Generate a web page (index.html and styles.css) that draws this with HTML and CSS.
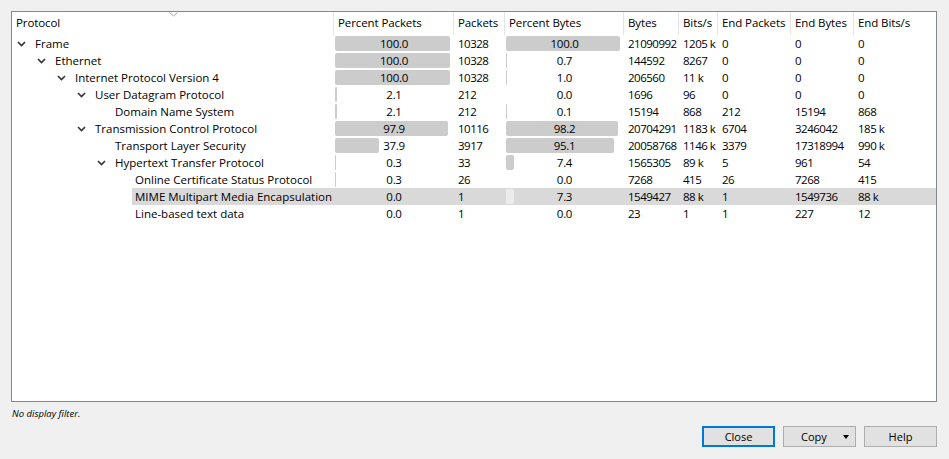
FILE: index.html
```html
<!DOCTYPE html>
<html>
<head>
<meta charset="utf-8">
<link rel="stylesheet" href="styles.css">
</head>
<body>
<div class="dialog">
  <div class="tree">
    <div class="row hdr">
      <div class="h proto">Protocol<svg class="sort" width="9" height="5" viewBox="0 0 9 5"><polyline points="0.5,0.5 4.5,4 8.5,0.5" fill="none" stroke="#a8a8a8" stroke-width="1"/></svg></div>
      <div class="h">Percent Packets</div>
      <div class="h">Packets</div>
      <div class="h">Percent Bytes</div>
      <div class="h">Bytes</div>
      <div class="h">Bits/s</div>
      <div class="h">End Packets</div>
      <div class="h">End Bytes</div>
      <div class="h last">End Bits/s</div>
    </div>

    <div class="row">
      <div class="c proto l0"><span class="tw"><svg width="9" height="6" viewBox="0 0 9 6"><polyline points="1,1 4.5,4.5 8,1" fill="none" stroke="#333" stroke-width="1.6"/></svg></span><span class="lbl">Frame</span></div>
      <div class="c pct"><span class="bar" style="--p:1"></span><span class="pv">100.0</span></div>
      <div class="c">10328</div>
      <div class="c pct"><span class="bar" style="--p:1"></span><span class="pv">100.0</span></div>
      <div class="c">21090992</div><div class="c">1205 k</div><div class="c">0</div><div class="c">0</div><div class="c">0</div>
    </div>

    <div class="row">
      <div class="c proto l1"><span class="tw"><svg width="9" height="6" viewBox="0 0 9 6"><polyline points="1,1 4.5,4.5 8,1" fill="none" stroke="#333" stroke-width="1.6"/></svg></span><span class="lbl">Ethernet</span></div>
      <div class="c pct"><span class="bar" style="--p:1"></span><span class="pv">100.0</span></div>
      <div class="c">10328</div>
      <div class="c pct"><span class="bar" style="--p:0.007"></span><span class="pv">0.7</span></div>
      <div class="c">144592</div><div class="c">8267</div><div class="c">0</div><div class="c">0</div><div class="c">0</div>
    </div>

    <div class="row">
      <div class="c proto l2"><span class="tw"><svg width="9" height="6" viewBox="0 0 9 6"><polyline points="1,1 4.5,4.5 8,1" fill="none" stroke="#333" stroke-width="1.6"/></svg></span><span class="lbl">Internet Protocol Version 4</span></div>
      <div class="c pct"><span class="bar" style="--p:1"></span><span class="pv">100.0</span></div>
      <div class="c">10328</div>
      <div class="c pct"><span class="bar" style="--p:0.01"></span><span class="pv">1.0</span></div>
      <div class="c">206560</div><div class="c">11 k</div><div class="c">0</div><div class="c">0</div><div class="c">0</div>
    </div>

    <div class="row">
      <div class="c proto l3"><span class="tw"><svg width="9" height="6" viewBox="0 0 9 6"><polyline points="1,1 4.5,4.5 8,1" fill="none" stroke="#333" stroke-width="1.6"/></svg></span><span class="lbl">User Datagram Protocol</span></div>
      <div class="c pct"><span class="bar" style="--p:0.021"></span><span class="pv">2.1</span></div>
      <div class="c">212</div>
      <div class="c pct"><span class="bar" style="--p:0"></span><span class="pv">0.0</span></div>
      <div class="c">1696</div><div class="c">96</div><div class="c">0</div><div class="c">0</div><div class="c">0</div>
    </div>

    <div class="row">
      <div class="c proto l4"><span class="tw"></span><span class="lbl">Domain Name System</span></div>
      <div class="c pct"><span class="bar" style="--p:0.021"></span><span class="pv">2.1</span></div>
      <div class="c">212</div>
      <div class="c pct"><span class="bar" style="--p:0.001"></span><span class="pv">0.1</span></div>
      <div class="c">15194</div><div class="c">868</div><div class="c">212</div><div class="c">15194</div><div class="c">868</div>
    </div>

    <div class="row">
      <div class="c proto l3"><span class="tw"><svg width="9" height="6" viewBox="0 0 9 6"><polyline points="1,1 4.5,4.5 8,1" fill="none" stroke="#333" stroke-width="1.6"/></svg></span><span class="lbl">Transmission Control Protocol</span></div>
      <div class="c pct"><span class="bar" style="--p:0.979"></span><span class="pv">97.9</span></div>
      <div class="c">10116</div>
      <div class="c pct"><span class="bar" style="--p:0.982"></span><span class="pv">98.2</span></div>
      <div class="c">20704291</div><div class="c">1183 k</div><div class="c">6704</div><div class="c">3246042</div><div class="c">185 k</div>
    </div>

    <div class="row">
      <div class="c proto l4"><span class="tw"></span><span class="lbl">Transport Layer Security</span></div>
      <div class="c pct"><span class="bar" style="--p:0.379"></span><span class="pv">37.9</span></div>
      <div class="c">3917</div>
      <div class="c pct"><span class="bar" style="--p:0.951"></span><span class="pv">95.1</span></div>
      <div class="c">20058768</div><div class="c">1146 k</div><div class="c">3379</div><div class="c">17318994</div><div class="c">990 k</div>
    </div>

    <div class="row">
      <div class="c proto l4"><span class="tw"><svg width="9" height="6" viewBox="0 0 9 6"><polyline points="1,1 4.5,4.5 8,1" fill="none" stroke="#333" stroke-width="1.6"/></svg></span><span class="lbl">Hypertext Transfer Protocol</span></div>
      <div class="c pct"><span class="bar" style="--p:0.003"></span><span class="pv">0.3</span></div>
      <div class="c">33</div>
      <div class="c pct"><span class="bar" style="--p:0.074"></span><span class="pv">7.4</span></div>
      <div class="c">1565305</div><div class="c">89 k</div><div class="c">5</div><div class="c">961</div><div class="c">54</div>
    </div>

    <div class="row">
      <div class="c proto l5"><span class="tw"></span><span class="lbl">Online Certificate Status Protocol</span></div>
      <div class="c pct"><span class="bar" style="--p:0.003"></span><span class="pv">0.3</span></div>
      <div class="c">26</div>
      <div class="c pct"><span class="bar" style="--p:0"></span><span class="pv">0.0</span></div>
      <div class="c">7268</div><div class="c">415</div><div class="c">26</div><div class="c">7268</div><div class="c">415</div>
    </div>

    <div class="row sel">
      <div class="c proto l5"><span class="tw"></span><span class="lbl">MIME Multipart Media Encapsulation</span></div>
      <div class="c pct"><span class="bar" style="--p:0"></span><span class="pv">0.0</span></div>
      <div class="c">1</div>
      <div class="c pct"><span class="bar" style="--p:0.073"></span><span class="pv">7.3</span></div>
      <div class="c">1549427</div><div class="c">88 k</div><div class="c">1</div><div class="c">1549736</div><div class="c">88 k</div>
    </div>

    <div class="row">
      <div class="c proto l5"><span class="tw"></span><span class="lbl">Line-based text data</span></div>
      <div class="c pct"><span class="bar" style="--p:0"></span><span class="pv">0.0</span></div>
      <div class="c">1</div>
      <div class="c pct"><span class="bar" style="--p:0"></span><span class="pv">0.0</span></div>
      <div class="c">23</div><div class="c">1</div><div class="c">1</div><div class="c">227</div><div class="c">12</div>
    </div>
  </div>

  <div class="status">No display filter.</div>

  <div class="buttons">
    <button class="btn focus">Close</button>
    <button class="btn copy"><span class="btxt">Copy</span><span class="arrow"></span></button>
    <button class="btn">Help</button>
  </div>
</div>
</body>
</html>
```

FILE: styles.css
```css
* { box-sizing: border-box; }
html, body {
  margin: 0;
  padding: 0;
  background: #f0f0f0;
}
body {
  font-family: "Open Sans", "Noto Sans", sans-serif;
  font-size: 11.5px;
  color: #000;
}
.dialog {
  width: 949px;
  height: 459px;
  padding: 11px 12px 0 11px;
  display: flex;
  flex-direction: column;
}
.tree {
  height: 391px;
  background: #fff;
  border: 1px solid #828790;
  display: flex;
  flex-direction: column;
}
.row {
  display: grid;
  grid-template-columns: 322px 120px 51px 119px 55px 39px 73px 63px 1fr;
  height: 17px;
  line-height: 17px;
}
.row.hdr {
  height: 23px;
  line-height: 22px;
}
.h {
  padding-left: 4px;
  border-right: 1px solid #e5e5e5;
  white-space: nowrap;
  overflow: hidden;
  letter-spacing: -0.1px;
}
.h.last { border-right: none; }
.h.proto {
  position: relative;
  overflow: visible;
}
.sort {
  position: absolute;
  top: 0;
  left: 157px;
  display: block;
}
.c {
  padding-left: 4px;
  white-space: nowrap;
  overflow: hidden;
  letter-spacing: -0.5px;
}
.c.proto {
  display: flex;
  padding-left: 3px;
  letter-spacing: 0;
}
.l1 { padding-left: 23px !important; }
.l2 { padding-left: 43px !important; }
.l3 { padding-left: 63px !important; }
.l4 { padding-left: 83px !important; }
.l5 { padding-left: 103px !important; }
.tw {
  width: 17px;
  flex: none;
  display: flex;
  align-items: center;
  padding-left: 2px;
}
.tw svg { display: block; margin-top: 1px; }
.lbl {
  flex: 1;
  padding-left: 3px;
}
.c.pct {
  display: grid;
  padding-left: 0;
  letter-spacing: -0.3px;
}
.c.pct > * { grid-area: 1 / 1; }
.bar {
  justify-self: start;
  align-self: start;
  margin-top: 1px;
  margin-left: 1px;
  height: 15px;
  width: calc((100% - 5px) * var(--p));
  background: #cccccc;
  border-radius: 2px;
}
.pv {
  justify-self: center;
  position: relative;
}
.row.sel .c:not(.proto),
.row.sel .lbl {
  background: #d9d9d9;
}
.row.sel .bar { background: #ececec; }

.status {
  margin-top: 5px;
  padding-left: 1px;
  height: 14px;
  line-height: 14px;
  font-size: 9.5px;
  font-style: italic;
}
.buttons {
  margin-top: 5px;
  display: flex;
  justify-content: flex-end;
  gap: 8px;
}
.btn {
  width: 73px;
  height: 21px;
  padding: 0;
  background: #e1e1e1;
  border: 1px solid #adadad;
  font-family: "Open Sans", "Noto Sans", sans-serif;
  font-size: 11px;
  color: #000;
  line-height: 18px;
  display: flex;
  align-items: center;
  justify-content: center;
}
.btn.focus {
  border: 2px solid #0078d7;
}
.btn.copy {
  justify-content: flex-start;
  padding-left: 17px;
  padding-right: 6px;
}
.arrow {
  margin-left: auto;
  width: 0;
  height: 0;
  border-left: 3.5px solid transparent;
  border-right: 3.5px solid transparent;
  border-top: 4px solid #000;
}
```
